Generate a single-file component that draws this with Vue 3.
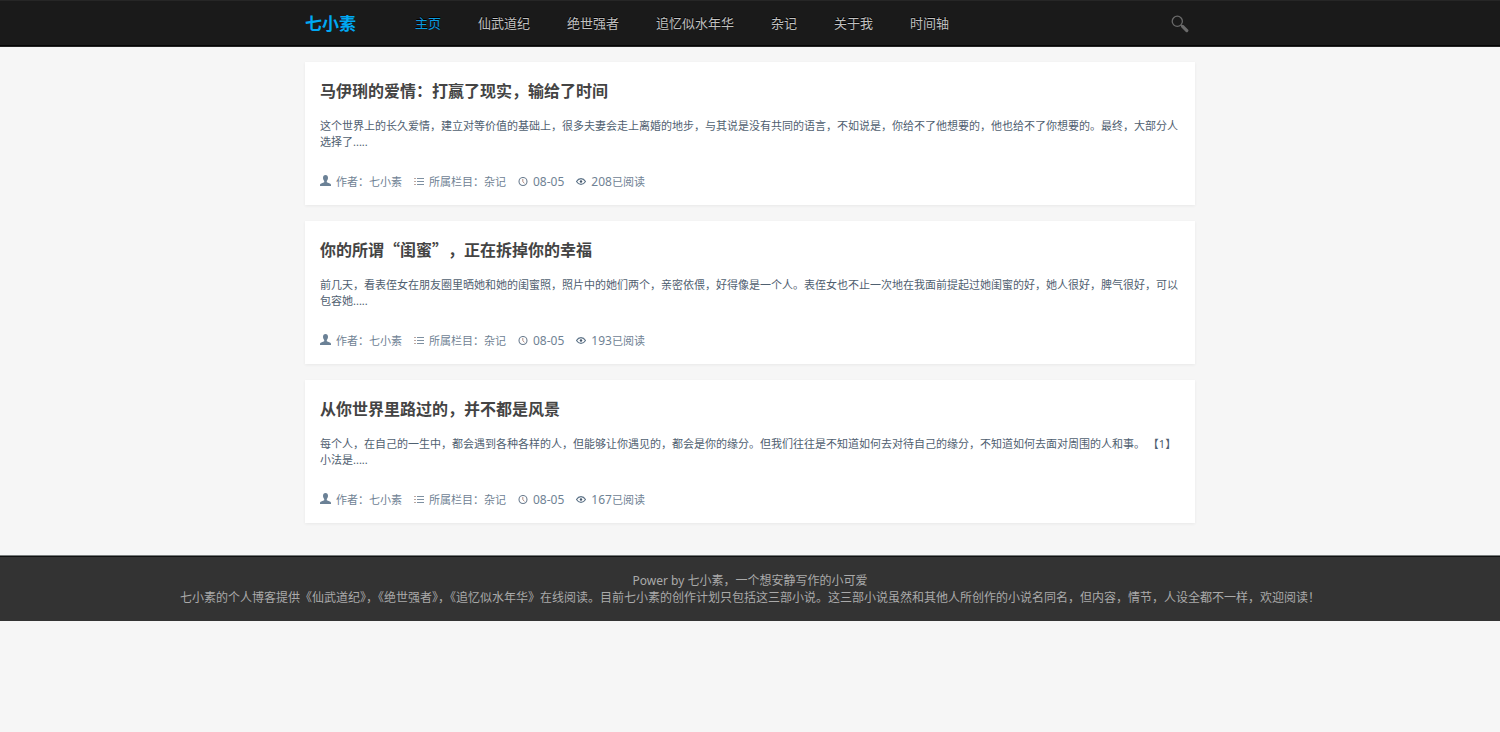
<script setup>
const navItems = ['主页', '仙武道纪', '绝世强者', '追忆似水年华', '杂记', '关于我', '时间轴']

const posts = [
  {
    title: '马伊琍的爱情：打赢了现实，输给了时间',
    summary:
      '这个世界上的长久爱情，建立对等价值的基础上，很多夫妻会走上离婚的地步，与其说是没有共同的语言，不如说是，你给不了他想要的，他也给不了你想要的。最终，大部分人选择了.....',
    author: '七小素',
    category: '杂记',
    date: '08-05',
    reads: 208
  },
  {
    title: '你的所谓“闺蜜”，正在拆掉你的幸福',
    summary:
      '前几天，看表侄女在朋友圈里晒她和她的闺蜜照，照片中的她们两个，亲密依偎，好得像是一个人。表侄女也不止一次地在我面前提起过她闺蜜的好，她人很好，脾气很好，可以包容她.....',
    author: '七小素',
    category: '杂记',
    date: '08-05',
    reads: 193
  },
  {
    title: '从你世界里路过的，并不都是风景',
    summary:
      '每个人，在自己的一生中，都会遇到各种各样的人，但能够让你遇见的，都会是你的缘分。但我们往往是不知道如何去对待自己的缘分，不知道如何去面对周围的人和事。 【1】小法是.....',
    author: '七小素',
    category: '杂记',
    date: '08-05',
    reads: 167
  }
]
</script>

<template>
  <div class="page" lang="zh-CN">
    <header class="topbar">
      <div class="container topbar-inner">
        <a class="logo" href="#">七小素</a>
        <nav class="nav">
          <a
            v-for="(item, i) in navItems"
            :key="item"
            href="#"
            :class="{ active: i === 0 }"
          >{{ item }}</a>
        </nav>
        <button class="search" type="button" aria-label="搜索">
          <svg viewBox="0 0 18 18" width="18" height="18" aria-hidden="true">
            <circle cx="6.3" cy="6.3" r="5.1" fill="none" stroke="#6a6a6a" stroke-width="1.3" />
            <path d="M10 10l1.6 1.6" stroke="#6a6a6a" stroke-width="1.4" />
            <path d="M11.6 11.4l4.2 4.2" stroke="#6a6a6a" stroke-width="3.2" stroke-linecap="round" />
          </svg>
        </button>
      </div>
    </header>

    <main class="container posts">
      <article v-for="post in posts" :key="post.title" class="card">
        <h2><a href="#">{{ post.title }}</a></h2>
        <p class="summary">{{ post.summary }}</p>
        <div class="meta">
          <span class="meta-item">
            <svg class="user" viewBox="0 0 11 11" width="11" height="11" aria-hidden="true">
              <path
                d="M5.500 0C3.900 0 3 1.200 3 2.800c0 1.300.500 2.500 1.200 3.200v1.200L1.200 8.500C.300 8.900 0 9.300 0 10v1h11v-1c0-.700-.300-1.100-1.200-1.500L6.800 7.200V6C7.500 5.300 8 4.100 8 2.800 8 1.200 7.100 0 5.500 0z"
                fill="#6b8196"
              />
            </svg>
            <span>作者：{{ post.author }}</span>
          </span>
          <span class="meta-item">
            <svg viewBox="0 0 10 10" width="10" height="10" aria-hidden="true">
              <path d="M0 1.500h2M0 4.500h2M0 7.500h2" stroke="#c0a89f" />
              <path d="M3 1.500h7M3 4.500h7M3 7.500h7" stroke="#7d90a2" />
            </svg>
            <span>所属栏目：{{ post.category }}</span>
          </span>
          <span class="meta-item">
            <svg viewBox="0 0 10 10" width="10" height="10" aria-hidden="true">
              <circle cx="5" cy="4.500" r="4" fill="none" stroke="#6b7d90" stroke-width="1.100" />
              <path d="M4.800 2V4.700L6.500 6.300" fill="none" stroke="#b08a80" />
            </svg>
            <time class="number">{{ post.date }}</time>
          </span>
          <span class="meta-item">
            <svg viewBox="0 0 10 10" width="10" height="10" aria-hidden="true">
              <path
                d="M.500 4.500C1.600 2.700 3.200 1.700 5 1.700S8.400 2.700 9.500 4.500C8.400 6.300 6.800 7.300 5 7.300S1.600 6.300.500 4.500z"
                fill="none"
                stroke="#5d7388"
                stroke-width="1.200"
              />
              <circle cx="5" cy="4.500" r="1.200" fill="#46586c" />
            </svg>
            <span><span class="number">{{ post.reads }}</span>已阅读</span>
          </span>
        </div>
      </article>
    </main>

    <footer class="footer">
      <p>Power by 七小素，一个想安静写作的小可爱</p>
      <p>七小素的个人博客提供《仙武道纪》，《绝世强者》，《追忆似水年华》在线阅读。目前七小素的创作计划只包括这三部小说。这三部小说虽然和其他人所创作的小说名同名，但内容，情节，人设全都不一样，欢迎阅读！</p>
    </footer>
  </div>
</template>

<style>
body {
  background: #f6f6f6;
}
</style>

<style scoped>
.page {
  font-family: "Noto Sans", "Noto Sans CJK SC", sans-serif;
  font-size: 11px;
  line-height: 16px;
  color: #4f6070;
}

a {
  color: inherit;
  text-decoration: none;
}

.container {
  box-sizing: border-box;
  max-width: 890px;
  margin: 0 auto;
}

.topbar {
  background: #1a1a1a;
  border-top: 1px solid #262626;
  border-bottom: 1px solid #222;
  box-shadow: inset 0 -1px 0 #050505;
}

.topbar-inner {
  display: flex;
  align-items: center;
  min-height: 45px;
}

.logo {
  margin-right: 59px;
  font-size: 17px;
  line-height: 24px;
  font-weight: 700;
  color: #00a8f3;
}

.nav {
  display: flex;
  gap: 37px;
  padding-bottom: 2px;
  font-size: 13px;
  line-height: 24px;
  color: #c0c0c0;
  text-shadow: 0 -1px 0 #000;
}

.nav .active {
  color: #0a9be0;
}

.search {
  display: flex;
  margin-left: auto;
  margin-right: 6px;
  padding: 0;
  border: 0;
  background: none;
}

.posts {
  display: flex;
  flex-direction: column;
  gap: 16px;
  padding: 15px 0 32px;
}

.card {
  padding: 16px 15px 15px;
  background: #fff;
  box-shadow: 0 1px 3px rgba(0, 0, 0, 0.06);
}

.card h2 {
  margin: 0 0 16px;
  font-family: "Noto Sans CJK SC", sans-serif;
  font-size: 16px;
  line-height: 24px;
  font-weight: 700;
  color: #444;
  text-spacing-trim: space-all;
}

.summary {
  margin: 0 0 24px;
}

.meta {
  display: flex;
  flex-wrap: wrap;
  gap: 12px;
  color: #6f8294;
}

.meta-item {
  display: flex;
  align-items: center;
  gap: 5px;
}

.meta .user {
  margin-bottom: 3px;
}

.number {
  font-size: 12px;
}

.footer {
  padding: 16px 16px 15px;
  border-top: 1px solid #777c7c;
  box-shadow: inset 0 1px 0 #111;
  background: #333;
  color: #aaa;
  font-size: 12px;
  line-height: 17px;
  text-align: center;
}

.footer p {
  margin: 0;
}
</style>
